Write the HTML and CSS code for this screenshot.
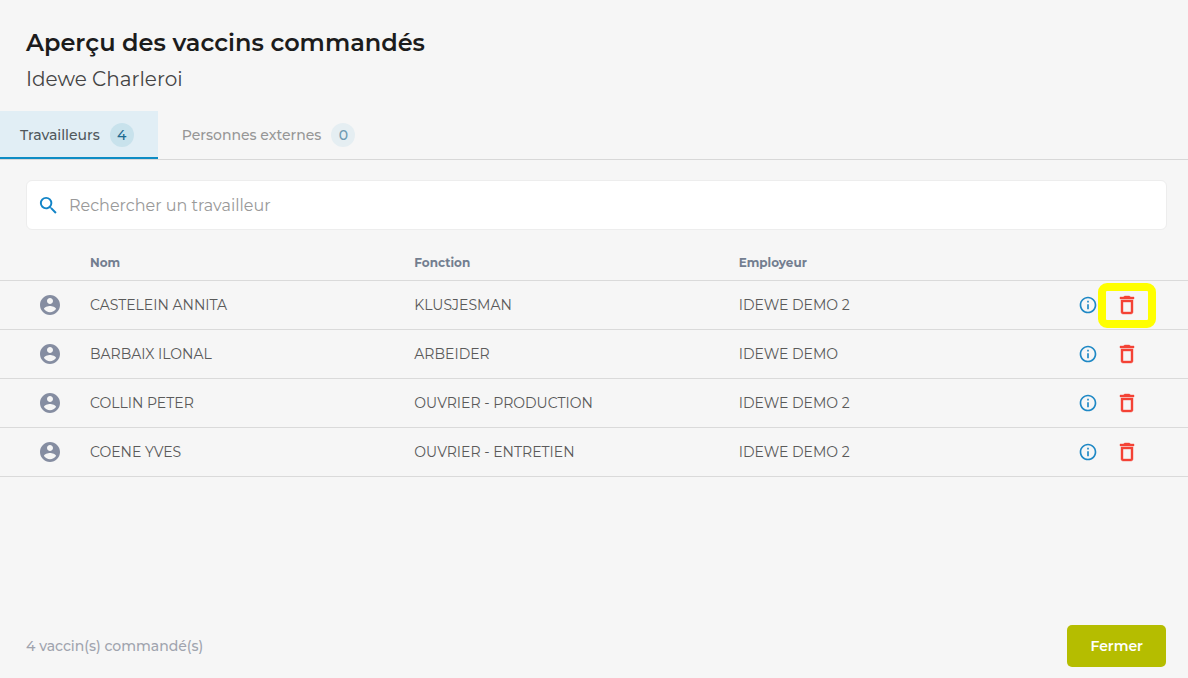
FILE: index.html
```html
<!DOCTYPE html>
<html lang="fr">
<head>
    <meta charset="UTF-8">
    <meta name="viewport" content="width=device-width, initial-scale=1.0">
    <title>Aperçu des vaccins commandés</title>
    <link rel="stylesheet" href="styles.css">
</head>
<body>
    <!-- shared icons -->
    <svg class="icon-defs" aria-hidden="true">
        <symbol id="icon-search" viewBox="0 0 24 24">
            <path d="M15.5 14h-.79l-.28-.27A6.47 6.47 0 0 0 16 9.5 6.5 6.5 0 1 0 9.5 16c1.61 0 3.09-.59 4.23-1.57l.27.28v.79l5 4.99L20.49 19l-4.99-5zm-6 0C7.01 14 5 11.99 5 9.500S7.010 5 9.500 5 14 7.010 14 9.500 11.990 14 9.500 14z"/>
        </symbol>
        <symbol id="icon-account" viewBox="0 0 24 24">
            <path d="M12 2C6.480 2 2 6.480 2 12s4.480 10 10 10 10-4.480 10-10S17.520 2 12 2zm0 3c1.660 0 3 1.340 3 3s-1.340 3-3 3-3-1.340-3-3 1.340-3 3-3zm0 14.200c-2.500 0-4.710-1.280-6-3.220.03-1.990 4-3.080 6-3.080 1.990 0 5.970 1.090 6 3.080-1.290 1.940-3.500 3.220-6 3.220z"/>
        </symbol>
        <symbol id="icon-info" viewBox="0 0 24 24">
            <path d="M11 7h2v2h-2zm0 4h2v6h-2zm1-9C6.480 2 2 6.480 2 12s4.480 10 10 10 10-4.480 10-10S17.520 2 12 2zm0 18c-4.410 0-8-3.590-8-8s3.590-8 8-8 8 3.590 8 8-3.590 8-8 8z"/>
        </symbol>
        <symbol id="icon-delete" viewBox="0 0 24 24">
            <path d="M6 19c0 1.100.9 2 2 2h8c1.100 0 2-.9 2-2V7H6v12zM8 9h8v10H8V9zm7.500-5l-1-1h-5l-1 1H5v2h14V4z"/>
        </symbol>
    </svg>

    <header class="header">
        <h1>Aperçu des vaccins commandés</h1>
        <p>Idewe Charleroi</p>
    </header>

    <div class="tabs" role="tablist">
        <button class="tab active" role="tab" aria-selected="true">Travailleurs <span class="badge">4</span></button>
        <button class="tab" role="tab" aria-selected="false">Personnes externes <span class="badge">0</span></button>
    </div>

    <label class="search">
        <svg><use href="#icon-search"/></svg>
        <input type="text" placeholder="Rechercher un travailleur" aria-label="Rechercher un travailleur">
    </label>

    <table class="workers">
        <thead>
            <tr>
                <th class="col-icon"></th>
                <th>Nom</th>
                <th>Fonction</th>
                <th>Employeur</th>
                <th class="col-actions"></th>
            </tr>
        </thead>
        <tbody>
            <tr>
                <td class="avatar"><svg><use href="#icon-account"/></svg></td>
                <td>CASTELEIN ANNITA</td>
                <td>KLUSJESMAN</td>
                <td>IDEWE DEMO 2</td>
                <td>
                    <div class="actions">
                        <button class="info" aria-label="Info"><svg><use href="#icon-info"/></svg></button>
                        <button class="delete highlight" aria-label="Supprimer"><svg><use href="#icon-delete"/></svg></button>
                    </div>
                </td>
            </tr>
            <tr>
                <td class="avatar"><svg><use href="#icon-account"/></svg></td>
                <td>BARBAIX ILONAL</td>
                <td>ARBEIDER</td>
                <td>IDEWE DEMO</td>
                <td>
                    <div class="actions">
                        <button class="info" aria-label="Info"><svg><use href="#icon-info"/></svg></button>
                        <button class="delete" aria-label="Supprimer"><svg><use href="#icon-delete"/></svg></button>
                    </div>
                </td>
            </tr>
            <tr>
                <td class="avatar"><svg><use href="#icon-account"/></svg></td>
                <td>COLLIN PETER</td>
                <td>OUVRIER - PRODUCTION</td>
                <td>IDEWE DEMO 2</td>
                <td>
                    <div class="actions">
                        <button class="info" aria-label="Info"><svg><use href="#icon-info"/></svg></button>
                        <button class="delete" aria-label="Supprimer"><svg><use href="#icon-delete"/></svg></button>
                    </div>
                </td>
            </tr>
            <tr>
                <td class="avatar"><svg><use href="#icon-account"/></svg></td>
                <td>COENE YVES</td>
                <td>OUVRIER - ENTRETIEN</td>
                <td>IDEWE DEMO 2</td>
                <td>
                    <div class="actions">
                        <button class="info" aria-label="Info"><svg><use href="#icon-info"/></svg></button>
                        <button class="delete" aria-label="Supprimer"><svg><use href="#icon-delete"/></svg></button>
                    </div>
                </td>
            </tr>
        </tbody>
    </table>

    <footer class="footer">
        <span>4 vaccin(s) commandé(s)</span>
        <button class="close">Fermer</button>
    </footer>
</body>
</html>
```
FILE: styles.css
```css
* {
    box-sizing: border-box;
}
body {
    font-family: Montserrat, Inter, "Open Sans", sans-serif;
    margin: 0;
    min-height: 100vh;
    display: flex;
    flex-direction: column;
    background-color: #f6f6f6;
    color: #1c1c1c;
}
button, input {
    font-family: inherit;
}
button {
    border: none;
    background: none;
    padding: 0;
    cursor: pointer;
}
svg {
    display: block;
    fill: currentColor;
}
.icon-defs {
    display: none;
}

.header {
    padding: 26px 26px 17px;
}
.header h1 {
    font-size: 24px;
    line-height: 34px;
    font-weight: 600;
    margin: 0 0 4px;
}
.header p {
    font-size: 20px;
    line-height: 30px;
    font-weight: 400;
    color: #444;
    margin: 0;
}

.tabs {
    display: flex;
    border-bottom: 1px solid #d8d8d8;
}
.tab {
    display: flex;
    align-items: center;
    gap: 10px;
    height: 48px;
    padding: 0 24px;
    font-size: 14px;
    font-weight: 500;
    color: #969696;
}
.tab:first-child {
    padding-left: 20px;
}
.tab.active {
    background-color: #e1eef5;
    color: #50585c;
    box-shadow: inset 0 -2px #0d8cc4;
}
.badge {
    width: 24px;
    line-height: 24px;
    border-radius: 50%;
    text-align: center;
    background-color: #e5eef2;
    color: #6f9bb3;
}
.active .badge {
    background-color: #c8e2ec;
    color: #1f6a90;
}

.search {
    display: flex;
    align-items: center;
    gap: 9px;
    height: 50px;
    margin: 20px 21px 0 26px;
    padding: 0 10px;
    background-color: #fff;
    border: 1px solid #ededed;
    border-radius: 6px;
}
.search svg {
    width: 23px;
    height: 23px;
    color: #1284c7;
}
.search input {
    flex: 1;
    border: none;
    outline: none;
    padding: 0;
    font-size: 16px;
    font-weight: 400;
}
.search input::placeholder {
    color: #999;
    opacity: 1;
}

.workers {
    width: 100%;
    margin-top: 16px;
    table-layout: fixed;
    border-collapse: collapse;
}
.workers th, .workers td {
    padding: 0;
    text-align: left;
    border-bottom: 1px solid #dadada;
}
.workers th {
    height: 34px;
    font-size: 12px;
    font-weight: 700;
    color: #737e90;
}
.workers td {
    height: 49px;
    font-size: 14px;
    font-weight: 400;
    color: #5a5a5a;
}
.workers .col-icon {
    width: 90px;
}
.workers .col-actions {
    width: 125px;
}
.workers .avatar {
    padding-left: 38px;
    color: #858da1;
}
.avatar svg {
    width: 24px;
    height: 24px;
}
.actions {
    display: flex;
    align-items: center;
    gap: 17px;
    padding-left: 15px;
}
.info {
    color: #1e88c5;
}
.info svg {
    width: 20px;
    height: 20px;
}
.delete {
    position: relative;
    color: #f44336;
}
.delete svg {
    width: 24px;
    height: 24px;
    stroke: currentColor;
    stroke-width: 0.4;
}
/* yellow frame around the delete button */
.highlight::after {
    content: "";
    position: absolute;
    inset: -10px -17px -11px;
    border: 8px solid #ff0;
    border-radius: 9px;
}

.footer {
    display: flex;
    justify-content: space-between;
    align-items: center;
    margin-top: auto;
    padding: 11px 22px 11px 26px;
    font-size: 14px;
    font-weight: 500;
    color: #a0a4ae;
}
.close {
    height: 42px;
    padding: 0 23px;
    border-radius: 5px;
    background-color: #b5bd00;
    color: #fff;
    font-size: 14px;
    font-weight: 600;
}
```
